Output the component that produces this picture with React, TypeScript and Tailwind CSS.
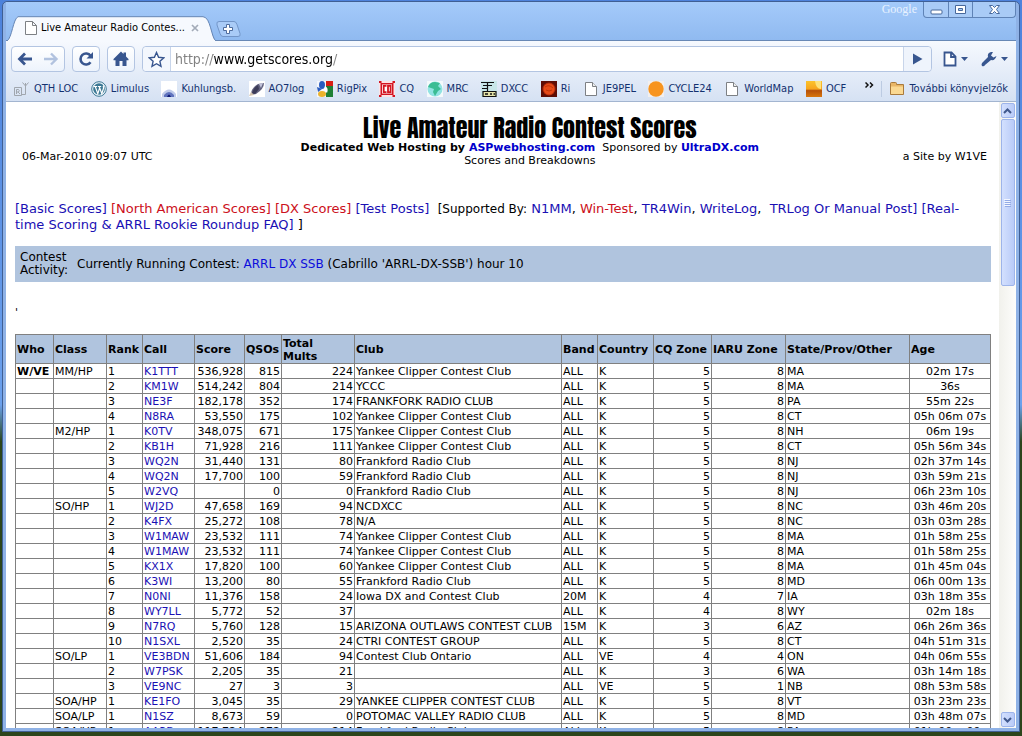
import type { ReactNode } from "react";

type Row = [cls: string, rank: string, call: string, score: string, qsos: string, mults: string, club: string, band: string, country: string, cq: string, iaru: string, state: string, age: string];

const YCCC = "Yankee Clipper Contest Club";
const FRC = "Frankford Radio Club";

const rows: Row[] = [
  ["MM/HP", "1", "K1TTT", "536,928", "815", "224", YCCC, "ALL", "K", "5", "8", "MA", "02m 17s"],
  ["", "2", "KM1W", "514,242", "804", "214", "YCCC", "ALL", "K", "5", "8", "MA", "36s"],
  ["", "3", "NE3F", "182,178", "352", "174", "FRANKFORK RADIO CLUB", "ALL", "K", "5", "8", "PA", "55m 22s"],
  ["", "4", "N8RA", "53,550", "175", "102", YCCC, "ALL", "K", "5", "8", "CT", "05h 06m 07s"],
  ["M2/HP", "1", "K0TV", "348,075", "671", "175", YCCC, "ALL", "K", "5", "8", "NH", "06m 19s"],
  ["", "2", "KB1H", "71,928", "216", "111", YCCC, "ALL", "K", "5", "8", "CT", "05h 56m 34s"],
  ["", "3", "WQ2N", "31,440", "131", "80", FRC, "ALL", "K", "5", "8", "NJ", "02h 37m 14s"],
  ["", "4", "WQ2N", "17,700", "100", "59", FRC, "ALL", "K", "5", "8", "NJ", "03h 59m 21s"],
  ["", "5", "W2VQ", "", "0", "0", FRC, "ALL", "K", "5", "8", "NJ", "06h 23m 10s"],
  ["SO/HP", "1", "WJ2D", "47,658", "169", "94", "NCDXCC", "ALL", "K", "5", "8", "NC", "03h 46m 20s"],
  ["", "2", "K4FX", "25,272", "108", "78", "N/A", "ALL", "K", "5", "8", "NC", "03h 03m 28s"],
  ["", "3", "W1MAW", "23,532", "111", "74", YCCC, "ALL", "K", "5", "8", "MA", "01h 58m 25s"],
  ["", "4", "W1MAW", "23,532", "111", "74", YCCC, "ALL", "K", "5", "8", "MA", "01h 58m 25s"],
  ["", "5", "KX1X", "17,820", "100", "60", YCCC, "ALL", "K", "5", "8", "MA", "01h 45m 04s"],
  ["", "6", "K3WI", "13,200", "80", "55", FRC, "ALL", "K", "5", "8", "MD", "06h 00m 13s"],
  ["", "7", "N0NI", "11,376", "158", "24", "Iowa DX and Contest Club", "20M", "K", "4", "7", "IA", "03h 18m 35s"],
  ["", "8", "WY7LL", "5,772", "52", "37", "", "ALL", "K", "4", "8", "WY", "02m 18s"],
  ["", "9", "N7RQ", "5,760", "128", "15", "ARIZONA OUTLAWS CONTEST CLUB", "15M", "K", "3", "6", "AZ", "06h 26m 36s"],
  ["", "10", "N1SXL", "2,520", "35", "24", "CTRI CONTEST GROUP", "ALL", "K", "5", "8", "CT", "04h 51m 31s"],
  ["SO/LP", "1", "VE3BDN", "51,606", "184", "94", "Contest Club Ontario", "ALL", "VE", "4", "4", "ON", "04h 06m 55s"],
  ["", "2", "W7PSK", "2,205", "35", "21", "", "ALL", "K", "3", "6", "WA", "03h 14m 18s"],
  ["", "3", "VE9NC", "27", "3", "3", "", "ALL", "VE", "5", "1", "NB", "08h 53m 58s"],
  ["SOA/HP", "1", "KE1FO", "3,045", "35", "29", "YANKEE CLIPPER CONTEST CLUB", "ALL", "K", "5", "8", "VT", "03h 23m 23s"],
  ["SOA/LP", "1", "N1SZ", "8,673", "59", "0", "POTOMAC VALLEY RADIO CLUB", "ALL", "K", "5", "8", "MD", "03h 48m 07s"],
  ["SOA/UP", "1", "AA3B", "117,724", "272", "214", FRC, "ALL", "K", "5", "8", "PA", "01h 00m 09s"],
];

const colClass = ["w-[38px]", "w-[53px]", "w-[36px]", "w-[52px]", "w-[50px]", "w-[37px]", "w-[73px]", "", "w-[36px]", "w-[56px]", "w-[58px]", "w-[74px]", "w-[124px]", "w-[81px]"];
const heads = ["Who", "Class", "Rank", "Call", "Score", "QSOs", "Total\nMults", "Club", "Band", "Country", "CQ Zone", "IARU Zone", "State/Prov/Other", "Age"];

function Icon({ children, size = 16 }: { children: ReactNode; size?: number }) {
  return (
    <svg width={size} height={size} viewBox="0 0 16 16" aria-hidden="true" className="shrink-0">
      {children}
    </svg>
  );
}

const page = (
  <Icon>
    <path d="M2.500 1.500h7l4 4v9h-11z" fill="#fff" stroke="#7d8084" />
    <path d="M9.500 1.500v4h4" fill="#eee" stroke="#7d8084" />
  </Icon>
);

const bookmarks: { label: string; icon: ReactNode }[] = [
  {
    label: "QTH LOC",
    icon: (
      <Icon>
        <path d="M.5 6.5h7v8h-7zM7.500 13.500h4V2M8.500 1.500l3 3.500 3-3.500M2.500 13V8.500h2q1.500 1 0 2.500h-2M4 11l2 2" fill="none" stroke="#a0a6ae" />
      </Icon>
    ),
  },
  {
    label: "Limulus",
    icon: (
      <Icon>
        <circle cx="8" cy="8" r="7.300" fill="#eef6fb" stroke="#3c7894" />
        <circle cx="8" cy="8" r="5.800" fill="#3c7894" />
        <path d="M2.800 5.500h3.400M4.200 5.500l2.600 7.200 1.900-6M7 5.500h3.200M8.200 5.500l2.600 7.200 1.800-5.700q-.8-1.500.2-2.500" fill="none" stroke="#fff" strokeWidth="1.200" />
      </Icon>
    ),
  },
  {
    label: "Kuhlungsb.",
    icon: (
      <Icon>
        <path d="M0 0h16v16H0z" fill="#fff" />
        <path d="M1 16v-3q7-9 14 0v3z" fill="#c0cbea" />
        <path d="M3 16v-2q5-6 10 0v2z" fill="#6073bd" />
        <path d="M6 16q2-5 4 0z" fill="#101c78" />
      </Icon>
    ),
  },
  {
    label: "AO7log",
    icon: (
      <Icon>
        <path d="M0 0h16v16H0z" fill="#fff" />
        <path d="M2 14Q2 7 9 3l6-1q0 6-8 11z" fill="#62627f" />
        <path d="M3 12q1-5 6-8l1 4-4 5z" fill="#3b3b58" />
        <path d="M10 3l4-1-2 5z" fill="#c3c4da" />
        <path d="M0 15l2-4 3 3z" fill="#d3c4ae" />
      </Icon>
    ),
  },
  {
    label: "RigPix",
    icon: (
      <Icon>
        <path d="M0 0h9v16H0z" fill="#f5f7fc" />
        <path d="M9 0h7v5H9z" fill="#d81e14" />
        <path d="M9 5h7v11H9z" fill="#1f8035" />
        <ellipse cx="5" cy="4" rx="3" ry="4" fill="#2a5cc0" />
        <path d="M0 6l5 2-4 3z" fill="#2a5cc0" />
        <ellipse cx="5" cy="13" rx="4" ry="3" fill="#ecb32c" />
        <path d="M8 5q4 2 2 7l-3-3z" fill="#fff" />
      </Icon>
    ),
  },
  {
    label: "CQ",
    icon: (
      <Icon>
        <path d="M0 0h16v16H0z" fill="#fbe3e5" />
        <path d="M0 0h2.500v2h11V0H16v2h-1.500v12H16v2h-2.500v-2h-11v2H0v-2h1.500V2H0z" fill="#d41420" />
        <path d="M3 3.500h10v9H3z" fill="#fff" />
        <path d="M7.500 4.800H4.700v6.400h2.800M9 4.800h2.600v6.400H9z" fill="none" stroke="#d41420" strokeWidth="1.800" />
      </Icon>
    ),
  },
  {
    label: "MRC",
    icon: (
      <Icon>
        <path d="M0 0h16v16H0z" fill="#f4fafb" />
        <circle cx="8" cy="8" r="7.500" fill="#91e3e2" />
        <path d="M1 6q2-5 7-5l5 1-2 3 3 3-3 2-3 5-2-4 1-3-3-1z" fill="#3bbd93" />
      </Icon>
    ),
  },
  {
    label: "DXCC",
    icon: (
      <Icon>
        <path d="M0 0h16v16H0z" fill="#c8e6e8" />
        <path d="M0 1.500h13M2 4.500h9M6.500 1v10M1 7.500h5" fill="none" stroke="#111" strokeWidth="1.200" />
        <path d="M2 10.500h13v5H2z" fill="#e6e4a8" stroke="#111" strokeWidth="1.200" />
        <path d="M4 13h3M9 13h2M12.500 13h1.500" stroke="#111" strokeWidth="1.500" />
      </Icon>
    ),
  },
  {
    label: "Ri",
    icon: (
      <Icon>
        <path d="M0 0h16v16H0z" fill="#5e0d05" />
        <circle cx="8" cy="8" r="6.500" fill="#b42b0b" />
        <circle cx="8" cy="8" r="5.500" fill="#e64a18" />
        <path d="M4 6q4-3 8 1M5 9q3 2 6 0" fill="none" stroke="#c13409" />
      </Icon>
    ),
  },
  { label: "JE9PEL", icon: page },
  {
    label: "CYCLE24",
    icon: (
      <Icon>
        <path d="M0 0h16v16H0z" fill="#f2efee" />
        <circle cx="8" cy="8" r="7.700" fill="#f7941f" />
      </Icon>
    ),
  },
  { label: "WorldMap", icon: page },
  {
    label: "OCF",
    icon: (
      <Icon>
        <defs>
          <linearGradient id="sunset" x2="0" y2="1">
            <stop offset="0" stopColor="#fbc32c" />
            <stop offset=".5" stopColor="#f7a51d" />
            <stop offset=".6" stopColor="#b5500a" />
            <stop offset="1" stopColor="#d8760c" />
          </linearGradient>
        </defs>
        <path d="M0 0h16v16H0z" fill="url(#sunset)" />
        <path d="M9 0h6v8q-5 0-6-8" fill="#fde27b" />
      </Icon>
    ),
  },
];

function TitleBar() {
  return (
    <div className="flex h-[38px] shrink-0 items-end bg-linear-to-b from-[#a4cafa] to-[#90baf0] pl-[1px]">
      <div className="relative flex h-6 w-[209px] items-center pl-[18px]">
        <svg viewBox="0 0 209 25" preserveAspectRatio="none" className="absolute top-0 left-0 h-[25px] w-full" aria-hidden="true">
          <path d="M0 25C5 22 6 3 11 .700H196C204 1 204 22 209 25" fill="#f6f9fe" stroke="#6585b4" />
        </svg>
        <div className="relative flex w-full items-center">
          <svg width="12" height="14" viewBox="0 0 12 14" aria-hidden="true">
            <path d="M.500.500h7l4 4v9H.500zM7.500.500v4h4" fill="#fff" stroke="#7d8084" />
          </svg>
          <span className="ml-1 w-[146px] truncate text-[11px] text-black">Live Amateur Radio Contes...</span>
          <button type="button" aria-label="Close tab" className="ml-1">
            <svg width="8" height="8" viewBox="0 0 8 8"><path d="M1 1l6 6M7 1L1 7" stroke="#a3abb8" strokeWidth="1.700" /></svg>
          </button>
        </div>
      </div>
      <button type="button" aria-label="New tab" className="mb-[3px]">
        <svg width="25" height="16" viewBox="0 0 25 16">
          <path d="M3 .500H18q2 0 3 3l3 9q1 3-2 3H7q-2 0-3-3L1 4Q0 .500 3 .500z" fill="#a9cbf7" stroke="#7295c8" />
          <path d="M10.500 3.500h3v3h3v3h-3v3h-3v-3h-3v-3h3z" fill="#fff" stroke="#4f6d9e" />
        </svg>
      </button>
      <div className="ml-auto flex items-start gap-[6px] self-start">
        <span className="font-['Liberation_Serif',serif] text-[12px] leading-[15px] text-[#e8f2ff]">Google</span>
        <div className="flex h-4 rounded-b-sm border border-t-0 border-[#5f83b6] bg-[#a9cbf6] text-[#47689b]">
          <button type="button" aria-label="Minimize" className="flex w-6 items-center justify-center">
            <svg width="13" height="13" viewBox="0 0 13 13"><rect x="1" y="7" width="11" height="4" rx="1" fill="#fff" stroke="currentColor" /></svg>
          </button>
          <button type="button" aria-label="Restore" className="flex w-[25px] items-center justify-center border-x border-[#5f83b6]">
            <svg width="13" height="13" viewBox="0 0 13 13"><path d="M1.500 2.500h10v8h-10z" fill="#fff" stroke="currentColor" /><path d="M4.500 5.500h4v2h-4z" fill="#a9cbf6" stroke="currentColor" /></svg>
          </button>
          <button type="button" aria-label="Close" className="flex w-[42px] items-center justify-center">
            <svg width="13" height="13" viewBox="0 0 13 13"><path d="M1.500 2.500h3l2 2 2-2h3L8.500 6.500l3 4h-3l-2-2-2 2h-3l3-4z" fill="#fff" stroke="currentColor" /></svg>
          </button>
        </div>
      </div>
    </div>
  );
}

const toolButton = "flex h-[26px] items-center justify-center rounded-[4px] border border-[#b3c5e2] bg-linear-to-b from-white to-[#edf3fc]";

function Toolbar() {
  return (
    <div className="shrink-0 border-t border-[#6888b5] bg-linear-to-b from-[#f6f9fe] to-[#d5e1f3]">
      <div className="flex h-9 items-center pr-2 pl-[5px] text-[#38568f]">
        <div className={`${toolButton} w-[54px]`}>
          <button type="button" aria-label="Back" className="flex flex-1 justify-center">
            <svg width="16" height="14" viewBox="0 0 16 14"><path d="M8 1.500L2.500 7 8 12.500M3 7h12" fill="none" stroke="currentColor" strokeWidth="2.800" /></svg>
          </button>
          <button type="button" aria-label="Forward" className="flex flex-1 justify-center text-[#b1c2df]">
            <svg width="16" height="14" viewBox="0 0 16 14"><path d="M8 1.500L13.500 7 8 12.500M13 7H1" fill="none" stroke="currentColor" strokeWidth="2.400" /></svg>
          </button>
        </div>
        <button type="button" aria-label="Reload" className={`${toolButton} ml-[7px] w-7`}>
          <svg width="16" height="16" viewBox="0 0 16 16"><path d="M12.500 11.200a5.500 5.500 0 1 1 0-6.400" fill="none" stroke="currentColor" strokeWidth="2.600" /><path d="M15 1v6.500H8.500z" fill="currentColor" /></svg>
        </button>
        <button type="button" aria-label="Home" className={`${toolButton} ml-[7px] w-7`}>
          <svg width="16" height="16" viewBox="0 0 16 16"><path d="M8 .500l2.500 2.600V1.500h2.500v4L15.500 8v1.200H13.500V15h-4v-5h-3v5h-4V9.200H.500V8z" fill="currentColor" /></svg>
        </button>
        <div className="ml-[7px] flex h-[26px] min-w-0 flex-1 items-stretch rounded-[4px] border border-[#b3c5e2] bg-white">
          <button type="button" aria-label="Bookmark this page" className="flex w-7 items-center justify-center rounded-l-[4px] border-r border-[#c8d5ea] bg-[#f3f7fd]">
            <svg width="17" height="17" viewBox="0 0 17 17"><path d="M8.500 1.500l2.100 4.800 5.200.500-3.900 3.500 1.100 5.100-4.500-2.700L4 15.400l1.100-5.100L1.200 6.800l5.200-.500z" fill="#fff" stroke="currentColor" strokeWidth="1.400" /></svg>
          </button>
          <input
            type="text"
            aria-label="Address"
            defaultValue="http://www.getscores.org/"
            className="min-w-0 flex-1 bg-[linear-gradient(to_right,#808080_42px,#000_42px,#000_162px,#808080_162px)] bg-clip-text px-1 text-[14px] text-transparent caret-black outline-none"
          />
          <button type="button" aria-label="Go" className="flex w-7 items-center justify-center rounded-r-[4px] border-l border-[#c8d5ea] bg-[#eff4fc]">
            <svg width="11" height="12" viewBox="0 0 11 12"><path d="M1 .500L10.500 6 1 11.500z" fill="currentColor" /></svg>
          </button>
        </div>
        <button type="button" aria-label="Page menu" className="ml-[11px] flex items-center gap-1">
          <svg width="14" height="16" viewBox="0 0 14 16"><path d="M1.500 1.500h7l4 4v9h-11zM8 1.500V6h4.500" fill="#fff" stroke="currentColor" strokeWidth="1.800" /></svg>
          <svg width="7" height="4" viewBox="0 0 7 4"><path d="M0 0h7L3.500 4z" fill="currentColor" /></svg>
        </button>
        <button type="button" aria-label="Customize" className="ml-[13px] flex items-center gap-1">
          <svg width="16" height="16" viewBox="0 0 16 16"><path d="M10 1q-4 1-3 5L1 12q-1 2 0 3 2 1 3-1l6-5q4 1 5.500-4l-3 1.500-2.500-2L12 1z" fill="currentColor" /></svg>
          <svg width="7" height="4" viewBox="0 0 7 4"><path d="M0 0h7L3.500 4z" fill="currentColor" /></svg>
        </button>
      </div>
      <nav aria-label="Bookmarks" className="flex h-[25px] items-center border-b border-[#a3b5d0] px-2 text-[11px] text-[#13316f]">
        <ul className="flex min-w-0 flex-1 items-center justify-between">
          {bookmarks.map((b) => (
            <li key={b.label}>
              <a href="#" className="flex items-center gap-1 whitespace-nowrap">
                {b.icon}
                {b.label}
              </a>
            </li>
          ))}
        </ul>
        <button type="button" aria-label="More bookmarks" className="ml-[19px] mb-2">
          <svg width="9" height="6" viewBox="0 0 9 6"><path d="M.500.500L3 3 .500 5.500M5 .500L7.500 3 5 5.500" fill="none" stroke="#111" strokeWidth="1.500" /></svg>
        </button>
        <a href="#" className="ml-[7px] flex items-center gap-1 border-l border-[#bccbe2] pl-[7px] whitespace-nowrap">
          <Icon>
            <path d="M1.500 13.500v-11q0-1 1-1h4q1 0 1 1v1h7v10z" fill="#e9b667" stroke="#a97a3c" />
            <path d="M2 5.500h12v7.500H2z" fill="#fbd992" />
          </Icon>
          További könyvjelzők
        </a>
      </nav>
    </div>
  );
}

const blue = "text-[#1a10b4]";
const red = "text-[#cc1020]";

function PageHeader() {
  return (
    <header className="grid grid-cols-[11fr_auto_9fr] items-end pr-1 pl-[7px] text-[11px] leading-[13px]">
      <p className="pb-1">06-Mar-2010 09:07 UTC</p>
      <div className="text-center">
        <h1 className="font-[Impact,Anton,'Open_Sans_Condensed','Roboto_Condensed','Liberation_Sans',sans-serif] text-[24px] leading-[26px] font-normal">Live Amateur Radio Contest Scores</h1>
        <p>
          <b>Dedicated Web Hosting by <a href="#" className="text-[#0000cc]">ASPwebhosting.com</a></b>&nbsp; Sponsored by <a href="#" className="font-bold text-[#0000cc]">UltraDX.com</a>
        </p>
        <p>Scores and Breakdowns</p>
      </div>
      <p className="pb-1 text-right">a Site by W1VE</p>
    </header>
  );
}

function ScoreTable() {
  return (
    <table className="mt-[14px] w-full table-fixed border-collapse text-[11px] leading-[13px]">
      <colgroup>
        {colClass.map((c, i) => <col key={heads[i]} className={c} />)}
      </colgroup>
      <thead>
        <tr className="h-[29px] bg-[#b0c4de] text-left">
          {heads.map((h) => (
            <th key={h} scope="col" className="border border-[#808080] px-[1px] pt-[1px] pb-0 font-bold whitespace-pre-line">{h}</th>
          ))}
        </tr>
      </thead>
      <tbody>
        {rows.map((r, i) => (
          <tr key={i} className="h-[15px] whitespace-nowrap">
            <th scope="row" className="border border-[#808080] px-[1px] pt-[1px] pb-0 text-left font-bold">{i === 0 ? "W/VE" : ""}</th>
            {r.map((v, j) => (
              <td
                key={j}
                className={`border border-[#808080] px-[1px] pt-[1px] pb-0 ${[3, 4, 5, 9, 10].includes(j) ? "text-right" : j === 12 ? "text-center" : "text-left"}`}
              >
                {j === 2 ? <a href="#" className={blue}>{v}</a> : v}
              </td>
            ))}
          </tr>
        ))}
      </tbody>
    </table>
  );
}

function ScrollBar() {
  const box = "flex w-[14px] items-center justify-center rounded-[2px] border border-[#9db4ea] bg-linear-to-r from-[#d3e0fe] to-[#b9cbf8]";
  return (
    <div className="flex w-[17px] shrink-0 flex-col items-center bg-linear-to-r from-[#f1f1ec] to-[#fdfdfb] py-[1px]">
      <button type="button" aria-label="Scroll up" className={`${box} h-[15px]`}>
        <svg width="9" height="6" viewBox="0 0 9 6"><path d="M1 5l3.500-3.500L8 5" fill="none" stroke="#40588c" strokeWidth="2" /></svg>
      </button>
      <div className={`${box} mt-[1px] h-[167px]`}>
        <svg width="7" height="8" viewBox="0 0 7 8"><path d="M0 .500h6M0 2.500h6M0 4.500h6M0 6.500h6" stroke="#f2f6ff" /><path d="M1 1.500h6M1 3.500h6M1 5.500h6M1 7.500h6" stroke="#93abe6" /></svg>
      </div>
      <button type="button" aria-label="Scroll down" className={`${box} mt-auto h-[15px]`}>
        <svg width="9" height="6" viewBox="0 0 9 6"><path d="M1 1l3.500 3.500L8 1" fill="none" stroke="#40588c" strokeWidth="2" /></svg>
      </button>
    </div>
  );
}

export default function App() {
  return (
    <div className="flex h-screen flex-col overflow-hidden bg-linear-to-b from-[#4d82dc] from-0% via-[#6ba0ec] via-55% to-[#2c451c] to-60% pt-[1px] pr-[2px] pb-[4px] pl-[2px] font-['DejaVu_Sans_Condensed','DejaVu_Sans',sans-serif]">
      <div className="flex min-h-0 flex-1 flex-col rounded-t-[5px] border border-[#3f5f94] bg-[#8fb2e6] px-[3px] pb-[3px]">
        <TitleBar />
        <Toolbar />
        <div className="flex min-h-0 flex-1 bg-white">
          <main className="min-w-0 flex-1 overflow-hidden pt-[13px] pr-2 pl-[9px] font-['DejaVu_Sans',sans-serif] text-black">
            <PageHeader />
            <p className="mt-[34px] text-[13px] leading-[16px]">
              <a href="#" className={blue}>[Basic Scores]</a> <a href="#" className={red}>[North American Scores]</a>{" "}
              <a href="#" className={red}>[DX Scores]</a> <a href="#" className={blue}>[Test Posts]</a>&nbsp;{" "}
              <span className="text-[12px] leading-none">[Supported By:</span> <a href="#" className={blue}>N1MM</a>, <a href="#" className={red}>Win-Test</a>,{" "}
              <a href="#" className={blue}>TR4Win</a>, <a href="#" className={blue}>WriteLog</a>,&nbsp;{" "}
              <a href="#" className={blue}>TRLog Or Manual Post]</a>{" "}
              <a href="#" className={blue}>[Real-<br />time Scoring &amp; ARRL Rookie Roundup FAQ]</a> ]
            </p>
            <section className="mt-[13px] flex h-9 items-center gap-[9px] bg-[#b0c4de] px-[5px] text-[12px] leading-[13px]">
              <div className="w-12">Contest Activity:</div>
              <div>Currently Running Contest: <a href="#" className="text-[#0c0cdc]">ARRL DX SSB</a> (Cabrillo 'ARRL-DX-SSB') hour 10</div>
            </section>
            <p className="mt-6 text-[11px] leading-[14px]">'</p>
            <ScoreTable />
          </main>
          <ScrollBar />
        </div>
      </div>
    </div>
  );
}
